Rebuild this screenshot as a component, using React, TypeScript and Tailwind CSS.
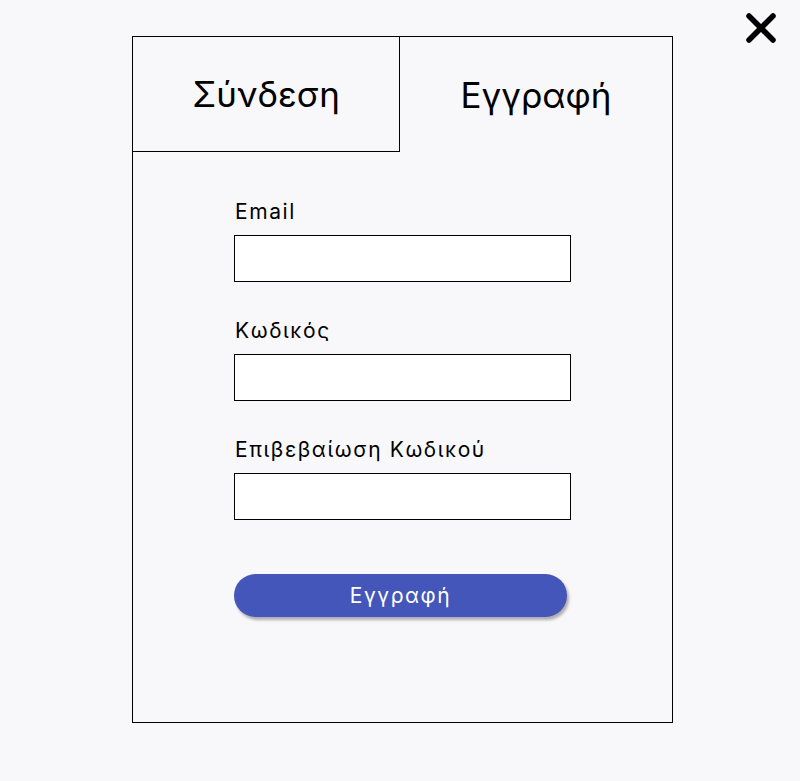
import React, { useState } from 'react';

const fields = [
  { id: 'email', label: 'Email', type: 'email' },
  { id: 'password', label: 'Κωδικός', type: 'password' },
  { id: 'confirm', label: 'Επιβεβαίωση Κωδικού', type: 'password' },
];

const CloseIcon = () => (
  <svg width="32" height="32" viewBox="0 0 32 32" fill="none">
    <path d="M4 4 L28 28 M28 4 L4 28" stroke="#000" strokeWidth="5.5" strokeLinecap="round" />
  </svg>
);

const App: React.FC = () => {
  const [tab, setTab] = useState<'login' | 'register'>('register');

  return (
    <div className="relative min-h-[781px] w-full bg-[#f8f8fa] pt-9 pl-[132px] font-['Inter',sans-serif] text-black">
      <button className="absolute right-[23px] top-[12px]">
        <CloseIcon />
      </button>

      <div className="flex h-[687px] w-[541px] flex-col border border-black">
        {/* Tabs */}
        <div className="flex h-[115px] text-[35px]">
          <button
            onClick={() => setTab('login')}
            className={`flex w-[267px] items-center justify-center pt-px ${tab === 'register' ? 'border-r border-b border-black' : ''}`}
          >
            Σύνδεση
          </button>
          <button
            onClick={() => setTab('register')}
            className={`flex flex-1 items-center justify-center pt-px ${tab === 'login' ? 'border-l border-b border-black' : ''}`}
          >
            Εγγραφή
          </button>
        </div>

        {/* Form */}
        <form className="flex flex-col pl-[101px] pt-[46px]" onSubmit={(e) => e.preventDefault()}>
          {fields.map((f, i) => (
            <div key={f.id} className={i > 0 ? 'mt-[35px]' : ''}>
              <label htmlFor={f.id} className="block pl-px text-[21px] leading-[28px] tracking-[0.075em]">
                {f.label}
              </label>
              <input
                id={f.id}
                type={f.type}
                className="mt-[9px] block h-[47px] w-[337px] border border-black bg-white px-2 outline-none"
              />
            </div>
          ))}

          <button
            type="submit"
            className="mt-[54px] h-[43px] w-[333px] rounded-full bg-[#4456b9] text-[21px] tracking-[0.075em] text-white shadow-[2px_3px_3px_rgba(0,0,0,0.3)]"
          >
            Εγγραφή
          </button>
        </form>
      </div>
    </div>
  );
};

export default App;
